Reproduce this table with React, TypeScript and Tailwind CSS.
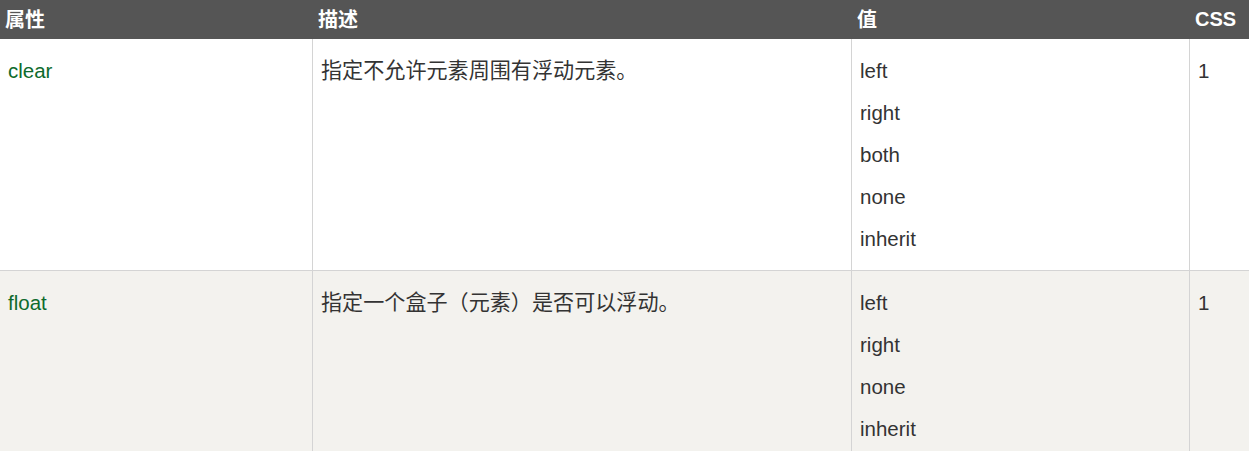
import React from "react";

const font = { fontFamily: '"Liberation Sans", "Noto Sans CJK SC", sans-serif' };

type Row = { name: string; desc: string; values: string[]; css: string; alt?: boolean };

const rows: Row[] = [
  { name: "clear", desc: "指定不允许元素周围有浮动元素。", values: ["left", "right", "both", "none", "inherit"], css: "1" },
  { name: "float", desc: "指定一个盒子（元素）是否可以浮动。", values: ["left", "right", "none", "inherit"], css: "1", alt: true },
];

export default function App() {
  return (
    <div className="w-[1249px] h-[451px] overflow-hidden bg-white" style={font}>
      <div className="grid grid-cols-[312px_539px_338px_1fr] bg-[#555555] text-white font-bold text-[20px] leading-[23px] h-[39px]">
        <div className="pl-[5px] pt-[9px]">属性</div>
        <div className="pl-[5px] pt-[9px] border-l border-[#555555]">描述</div>
        <div className="pl-[5px] pt-[9px] border-l border-[#555555]">值</div>
        <div className="pl-[5px] pt-[8px] border-l border-[#555555]">CSS</div>
      </div>
      {rows.map((r) => (
        <div
          key={r.name}
          className={`grid grid-cols-[312px_539px_338px_1fr] border-b border-[#d4d4d4] text-[20.5px] leading-[42px] text-[#333333] ${r.alt ? "bg-[#f3f2ee]" : "bg-white"}`}
        >
          <div className="pl-[8px] pt-[11px] pb-[10px] text-[#0d6a2c]">{r.name}</div>
          <div className="pl-[8px] pt-[11px] pb-[10px] border-l border-[#d4d4d4] text-[21.1px]">{r.desc}</div>
          <div className="pl-[8px] pt-[11px] pb-[10px] border-l border-[#d4d4d4]">
            {r.values.map((v) => (
              <div key={v}>{v}</div>
            ))}
          </div>
          <div className="pl-[8px] pt-[11px] pb-[10px] border-l border-[#d4d4d4]">{r.css}</div>
        </div>
      ))}
    </div>
  );
}
